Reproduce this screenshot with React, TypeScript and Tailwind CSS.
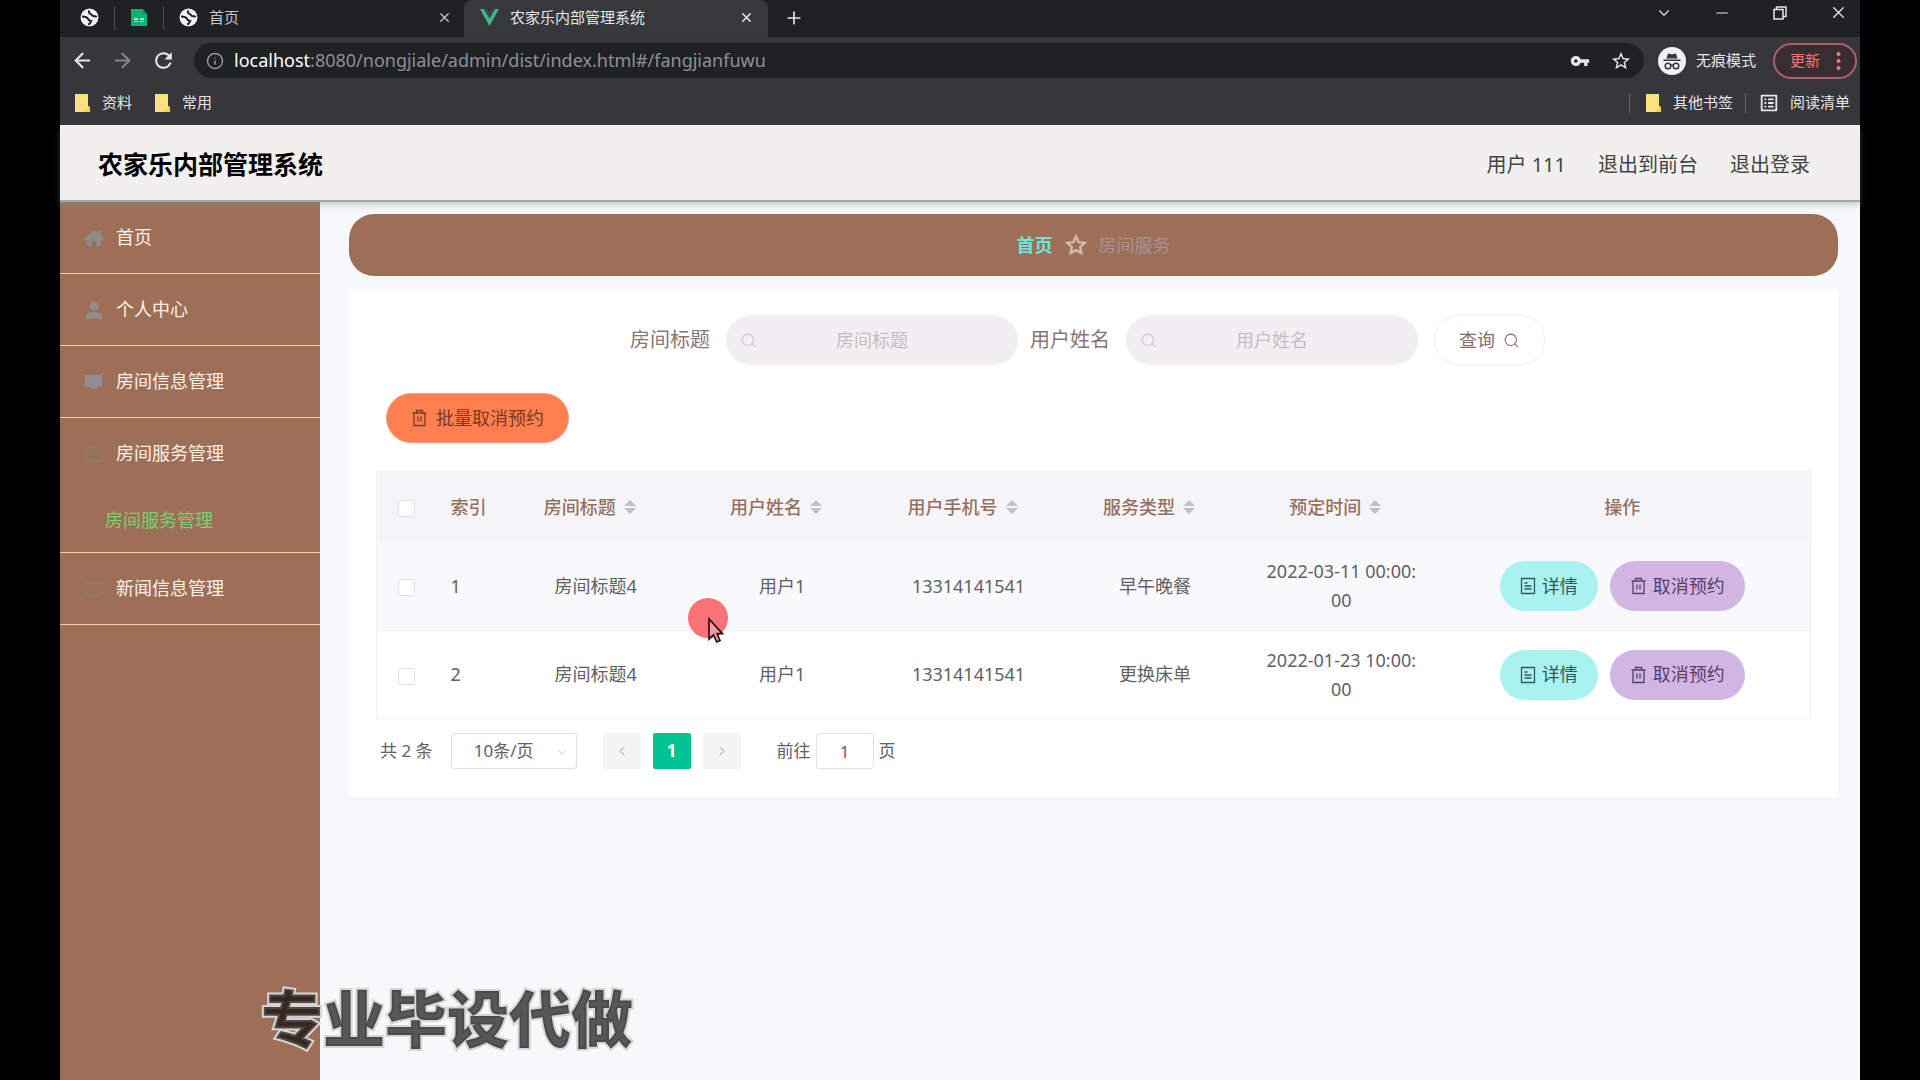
import type { ReactNode } from 'react';
import { ArrowLeft, ArrowRight, ChevronDown, ChevronLeft, ChevronRight, Info, Minus, Plus, Search, X } from 'lucide-react';
import { MdOutlineListAlt, MdRefresh, MdStarBorder, MdVpnKey } from 'react-icons/md';

type Booking = { id: number; room: string; user: string; phone: string; service: string; time: string };

const BOOKINGS: Booking[] = [
  { id: 1, room: '房间标题4', user: '用户1', phone: '13314141541', service: '早午晚餐', time: '2022-03-11 00:00:00' },
  { id: 2, room: '房间标题4', user: '用户1', phone: '13314141541', service: '更换床单', time: '2022-01-23 10:00:00' },
];

const SORTABLE = ['房间标题', '用户姓名', '用户手机号', '服务类型', '预定时间'];

export default function App() {
  return (
    <div className="relative min-h-screen bg-black px-[60px] font-['Noto_Sans','Noto_Sans_CJK_SC',sans-serif]">
      <div className="flex min-h-screen flex-col">
        <BrowserChrome />
        <AppHeader />
        <div className="flex flex-1 bg-[#f7f8fc]">
          <Sidebar />
          <main className="min-w-0 flex-1 pt-3 pr-[22px] pb-8 pl-[29px]">
            <Breadcrumb />
            <section className="mt-[13px] bg-white px-[27px] pt-[26px] pb-7">
              <SearchForm />
              <button className="mt-7 ml-[10px] flex h-[50px] items-center gap-2 rounded-full border border-[#fd9c78] bg-[#ff7f50] px-6 text-[18px] text-[#7c3a1e]">
                <TrashIcon />
                批量取消预约
              </button>
              <BookingTable />
              <Pagination />
            </section>
          </main>
        </div>
      </div>
      <Pointer />
      <p className="absolute bottom-[16px] left-[261px] text-[62px] leading-[90px] font-black text-black/65 [-webkit-text-stroke:4px_#d8d4d2] [paint-order:stroke_fill]">
        专业毕设代做
      </p>
    </div>
  );
}

/* ---------- browser window ---------- */

function BrowserChrome() {
  return (
    <div className="relative z-10 bg-[#37363a] text-[15px] text-[#e6e6e8]">
      <div className="flex h-[37px] items-center bg-[#1f2224]">
        <div className="flex h-full items-center gap-[15px] pb-[2px] pl-5">
          <GlobeIcon />
          <span className="h-6 w-px bg-[#4c4f52]" />
          <SheetIcon />
          <span className="h-6 w-px bg-[#4c4f52]" />
        </div>
        <div className="flex h-full w-[300px] items-center gap-[11px] pr-3 pb-[2px] pl-[15px] text-[#c4c6c8]">
          <GlobeIcon />
          <span className="flex-1">首页</span>
          <button aria-label="关闭标签页">
            <X size={15} />
          </button>
        </div>
        <div className="flex h-full w-[304px] items-center gap-[11px] rounded-t-lg bg-[#37383b] pr-[14px] pb-[2px] pl-4">
          <VueIcon />
          <span className="flex-1">农家乐内部管理系统</span>
          <button aria-label="关闭标签页">
            <X size={15} strokeWidth={2.5} />
          </button>
        </div>
        <button aria-label="新标签页" className="ml-4 pb-[2px]">
          <Plus size={20} />
        </button>
        <div className="ml-auto flex items-center gap-10 self-start pt-[3px] pr-3">
          <button aria-label="搜索标签页">
            <ChevronDown size={18} strokeWidth={1.5} />
          </button>
          <button aria-label="最小化">
            <Minus size={18} strokeWidth={1.5} />
          </button>
          <button aria-label="还原">
            <svg width="18" height="18" viewBox="0 0 18 18" fill="none" stroke="currentColor" strokeWidth="1.5">
              <rect x="3" y="5.5" width="9" height="9.5" />
              <path d="M5.5 5.5V3H15v9.5h-3" />
            </svg>
          </button>
          <button aria-label="关闭">
            <X size={19} strokeWidth={1.7} />
          </button>
        </div>
      </div>

      <div className="flex h-[47px] items-center pr-[3px] pl-[11px]">
        <div className="flex items-center gap-[17px]">
          <button aria-label="后退">
            <ArrowLeft size={23} strokeWidth={2.3} />
          </button>
          <button aria-label="前进" className="text-[#86868a]">
            <ArrowRight size={23} strokeWidth={2.3} />
          </button>
          <button aria-label="刷新">
            <MdRefresh size={25} />
          </button>
        </div>
        <div className="ml-[18px] flex h-[35px] flex-1 items-center rounded-full bg-[#202125] pr-3 pl-3">
          <Info size={18} className="text-[#98989c]" />
          <span className="ml-[10px] flex-1 text-[18px] text-[#8f9094]">
            <span className="text-white">localhost</span>:8080/nongjiale/admin/dist/index.html#/fangjianfuwu
          </span>
          <MdVpnKey size={20} />
          <MdStarBorder size={22} className="ml-5" />
        </div>
        <div className="ml-[14px] flex items-center gap-[10px] pr-[17px]">
          <IncognitoIcon />
          无痕模式
        </div>
        <button className="flex h-9 items-center gap-4 rounded-full border-2 border-[#a3626a] bg-[#3a2d31] pr-[14px] pl-[15px] text-[#ec7b74]">
          更新
          <svg width="5" height="20" viewBox="0 0 5 20" fill="currentColor">
            <circle cx="2.5" cy="3" r="2" />
            <circle cx="2.5" cy="10" r="2" />
            <circle cx="2.5" cy="17" r="2" />
          </svg>
        </button>
      </div>

      <div className="flex h-[41px] items-center pr-[10px] pb-1 pl-[14px]">
        <Bookmark>资料</Bookmark>
        <span className="w-[22px]" />
        <Bookmark>常用</Bookmark>
        <span className="mr-[15px] ml-auto h-5 w-px bg-[#67666b]" />
        <Bookmark>其他书签</Bookmark>
        <span className="mx-3 h-5 w-px bg-[#67666b]" />
        <a href="#reading" className="flex items-center gap-[10px]">
          <MdOutlineListAlt size={22} />
          阅读清单
        </a>
      </div>
    </div>
  );
}

function Bookmark({ children }: { children: ReactNode }) {
  return (
    <a href="#bookmark" className="flex items-center gap-3">
      <svg width="16" height="18" viewBox="0 0 16 18">
        <path d="M1 0h13v12l2 1v5H1z" fill="#fbe17d" />
        <path d="M11 15h3v-3l2 1v5h-5z" fill="#f2d25e" />
      </svg>
      {children}
    </a>
  );
}

/* ---------- admin shell ---------- */

function AppHeader() {
  return (
    <header className="relative flex h-[77px] items-center justify-between border-b-2 border-[#a3a9a9] bg-[#f1f0ef] pt-1 pr-[50px] pl-[38px] shadow-[0_3px_6px_#7d8b8b66]">
      <h1 className="text-[25px] font-bold text-black">农家乐内部管理系统</h1>
      <nav className="flex gap-8 text-[20px] text-[#444]">
        <span>用户 111</span>
        <a href="#front">退出到前台</a>
        <a href="#logout">退出登录</a>
      </nav>
    </header>
  );
}

function Sidebar() {
  return (
    <aside className="w-[260px] shrink-0 bg-[#9e6f57] text-[18px] text-[#fff1ea]">
      <ul>
        <MenuItem
          label="首页"
          icon={<path d="M10 2 0 11l1.5 1.5L3 11v7h5v-5h4v5h5v-7l1.5 1.5L20 11l-3-3V3h-2v3z" fill="#8d8c8c" />}
        />
        <MenuItem
          label="个人中心"
          icon={
            <g fill="#8f8c8a">
              <circle cx="10" cy="6" r="4.5" />
              <path d="M2 19v-3c0-3 3-4 8-4s8 1 8 4v3z" />
            </g>
          }
        />
        <MenuItem label="房间信息管理" icon={<path d="M1 3h14l4-2-1 3v11h-5v2H6v-2H1z" fill="#918b92" />} />
        <li className="border-b border-[#fbc9ab]">
          <MenuLink
            label="房间服务管理"
            icon={<path d="M2 6h16v11H2zM7 6V3h6v3M2 11h16" fill="none" stroke="#8c7c73" strokeWidth="1.5" />}
          />
          <a href="#fangjianfuwu" className="flex h-[63px] items-center pl-[45px] text-[#72d370]">
            房间服务管理
          </a>
        </li>
        <MenuItem
          label="新闻信息管理"
          icon={<path d="M2 4h16v12H2zM6 16v2h8v-2" fill="none" stroke="#8c7c73" strokeWidth="1.5" />}
        />
      </ul>
    </aside>
  );
}

function MenuItem(props: { label: string; icon: ReactNode }) {
  return (
    <li className="border-b border-[#fbc9ab]">
      <MenuLink {...props} />
    </li>
  );
}

function MenuLink({ label, icon }: { label: string; icon: ReactNode }) {
  return (
    <a href="#menu" className="flex h-[71px] items-center gap-3 pl-6">
      <svg width="20" height="20" viewBox="0 0 20 20">
        {icon}
      </svg>
      {label}
    </a>
  );
}

function Breadcrumb() {
  return (
    <nav className="flex h-[62px] items-center justify-center gap-3 rounded-[25px] bg-[#9e6f57] text-[18px]">
      <a href="#home" className="font-bold text-[#6fe3d3]">
        首页
      </a>
      <svg width="22" height="22" viewBox="0 0 22 22" fill="none" stroke="#d3b8ad" strokeWidth="2.4">
        <path d="M11 2.500l2.600 5.600 6 .8-4.400 4.200 1.100 6-5.300-2.900-5.300 2.900 1.100-6L2.400 8.900l6-.8z" />
      </svg>
      <span className="text-[#a78f98]">房间服务</span>
    </nav>
  );
}

/* ---------- room service list ---------- */

function SearchForm() {
  return (
    <form className="flex items-center justify-center pr-3 text-[20px] text-[#8a7672]">
      <SearchField id="room-title" label="房间标题" />
      <span className="w-3" />
      <SearchField id="user-name" label="用户姓名" />
      <button type="button" className="ml-4 flex h-[50px] items-center gap-2 rounded-full border border-[#f2ecee] px-6 text-[18px] text-[#8a6b66]">
        查询
        <Search size={17} strokeWidth={1.5} />
      </button>
    </form>
  );
}

function SearchField({ id, label }: { id: string; label: string }) {
  return (
    <div className="flex items-center gap-4">
      <label htmlFor={id}>{label}</label>
      <div className="relative">
        <Search size={17} strokeWidth={1.5} className="absolute top-[17px] left-[14px] text-[#ccc5cb]" />
        <input
          id={id}
          placeholder={label}
          className="h-[50px] w-[292px] rounded-full bg-[#f3eef2] px-10 text-center text-[18px] placeholder:text-[#c5bec4]"
        />
      </div>
    </div>
  );
}

function BookingTable() {
  return (
    <table className="mt-7 w-full table-fixed border border-[#eff0f4] text-[18px] text-[#5f6166]">
      <colgroup>
        <col className="w-[60px]" />
        <col className="w-[66px]" />
        {SORTABLE.map((name) => (
          <col key={name} className="w-[13%]" />
        ))}
        <col />
      </colgroup>
      <thead className="bg-[#f5f5f7] text-[#96705f]">
        <tr className="h-[71px]">
          <th>
            <Checkbox label="全选" />
          </th>
          <th className="pl-[14px] text-left font-medium">索引</th>
          {SORTABLE.map((name) => (
            <th key={name} className="pr-3 font-medium">
              <button className="inline-flex items-center gap-2">
                {name}
                <svg width="12" height="16" viewBox="0 0 12 16" fill="#bfc1c6">
                  <path d="M6 1l6 6H0zM6 15l6-6H0z" />
                </svg>
              </button>
            </th>
          ))}
          <th className="font-medium">操作</th>
        </tr>
      </thead>
      <tbody>
        {BOOKINGS.map((b) => (
          <tr key={b.id} className="h-[88px] border-b border-[#f3f4f7] text-center odd:bg-[#f9f9fb]">
            <td>
              <Checkbox label={`选择第${b.id}行`} />
            </td>
            <td className="pl-[14px] text-left">{b.id}</td>
            <td>{b.room}</td>
            <td>{b.user}</td>
            <td>{b.phone}</td>
            <td>{b.service}</td>
            <td className="px-4 leading-[29px] break-all">{b.time}</td>
            <td>
              <div className="flex justify-center gap-3">
                <button className="flex h-[50px] items-center gap-[6px] rounded-full bg-[#a9f2ef] px-5 text-[#35585c]">
                  <DetailIcon />
                  详情
                </button>
                <button className="flex h-[50px] items-center gap-[6px] rounded-full bg-[#d1b6e4] px-5 text-[#58406b]">
                  <TrashIcon />
                  取消预约
                </button>
              </div>
            </td>
          </tr>
        ))}
      </tbody>
    </table>
  );
}

function Checkbox({ label }: { label: string }) {
  return (
    <input
      type="checkbox"
      aria-label={label}
      className="size-[17px] appearance-none rounded-[2px] border border-[#e0e1e6] bg-white align-middle checked:bg-[#00c292]"
    />
  );
}

function Pagination() {
  return (
    <div className="mt-[14px] flex h-9 items-center pl-1 text-[17px] text-[#606266]">
      <span>共 2 条</span>
      <div className="relative ml-[18px]">
        <select
          aria-label="每页条数"
          className="h-9 w-[126px] appearance-none rounded-[3px] border border-[#dfe0e5] bg-white pr-5 text-center"
        >
          <option>10条/页</option>
        </select>
        <ChevronDown size={14} strokeWidth={1.5} className="absolute top-3 right-2 text-[#c0c4cc]" />
      </div>
      <button aria-label="上一页" className="ml-[26px] flex h-9 w-[38px] items-center justify-center rounded-[2px] bg-[#f4f4f5] text-[#c0c4cc]">
        <ChevronLeft size={16} />
      </button>
      <button className="ml-3 h-9 w-[38px] rounded-[2px] bg-[#00c292] font-bold text-white">1</button>
      <button aria-label="下一页" className="ml-3 flex h-9 w-[38px] items-center justify-center rounded-[2px] bg-[#f4f4f5] text-[#c0c4cc]">
        <ChevronRight size={16} />
      </button>
      <label htmlFor="goto-page" className="ml-[36px]">
        前往
      </label>
      <input
        id="goto-page"
        defaultValue="1"
        className="mx-[5px] h-9 w-[58px] rounded-[3px] border border-[#e2e3e8] text-center"
      />
      <span>页</span>
    </div>
  );
}

/* ---------- drawings ---------- */

function TrashIcon() {
  return (
    <svg width="17" height="18" viewBox="0 0 17 18" fill="none" stroke="currentColor" strokeWidth="1.3">
      <path d="M1.5 4h14M5.5 4V1.5h6V4M3 4v12.5h11V4M7 7.5v5M10 7.5v5" />
    </svg>
  );
}

function DetailIcon() {
  return (
    <svg width="16" height="18" viewBox="0 0 16 18" fill="none" stroke="currentColor" strokeWidth="1.3">
      <path d="M1.5 1.5h13v15h-13zM4.5 6h3M4.5 9h7M4.5 12h7" />
    </svg>
  );
}

function GlobeIcon() {
  return (
    <svg width="19" height="19" viewBox="0 0 19 19" className="shrink-0">
      <circle cx="9.500" cy="9.500" r="9" fill="#f1f3f4" />
      <path
        d="M2 8.500c3 0 5 .4 6 2.300.7 1.400 1 2.200 3.200 2.200-.4 1.600-1.600 2.800-3 3.600M9.500 2.500c-1 1.600-.6 3 1 3.400 1.500.4 1.500 2 3.200 2.300 1.300.2 2.200 0 3.100.6"
        fill="none"
        stroke="#1f2224"
        strokeWidth="2"
      />
    </svg>
  );
}

function SheetIcon() {
  return (
    <svg width="18" height="19" viewBox="0 0 18 19" className="shrink-0">
      <path d="M1 1h12l4 5v12H1z" fill="#10b274" />
      <path d="M13 1v5h4z" fill="#0a8757" />
      <path d="M4 10h4v2H4zM10 10h4v2h-4zM4 13h4v1H4zM10 13h4v1h-4z" fill="#a5e6ca" />
    </svg>
  );
}

function VueIcon() {
  return (
    <svg width="19" height="17" viewBox="0 0 19 17" className="shrink-0">
      <path d="M0 0h4l5.500 9.500L15 0h4L9.500 17z" fill="#41b883" />
      <path d="M4 0h3.200l2.300 4 2.300-4H15L9.500 9.500z" fill="#35495e" />
    </svg>
  );
}

function IncognitoIcon() {
  return (
    <svg width="28" height="28" viewBox="0 0 28 28">
      <circle cx="14" cy="14" r="14" fill="#f0f1f5" />
      <path d="M10 6.500 14 7.300l4-.8 1.500 5h-11zM5.500 12.500h17V14h-17z" fill="#37363a" />
      <g fill="none" stroke="#37363a" strokeWidth="1.500">
        <circle cx="10" cy="19" r="2.800" />
        <circle cx="18" cy="19" r="2.800" />
        <path d="M12.800 18.500q1.200-.8 2.400 0" />
      </g>
    </svg>
  );
}

function Pointer() {
  return (
    <svg width="42" height="48" viewBox="0 0 42 48" className="pointer-events-none absolute top-[598px] left-[688px]">
      <circle cx="20" cy="20" r="20" fill="#fb7277" />
      <path d="M21 21v20l4.500-4 3.200 7 3.300-1.500-3-6.800h5.500z" fill="#fb9a9c" stroke="#2b1012" strokeWidth="1.700" />
    </svg>
  );
}
